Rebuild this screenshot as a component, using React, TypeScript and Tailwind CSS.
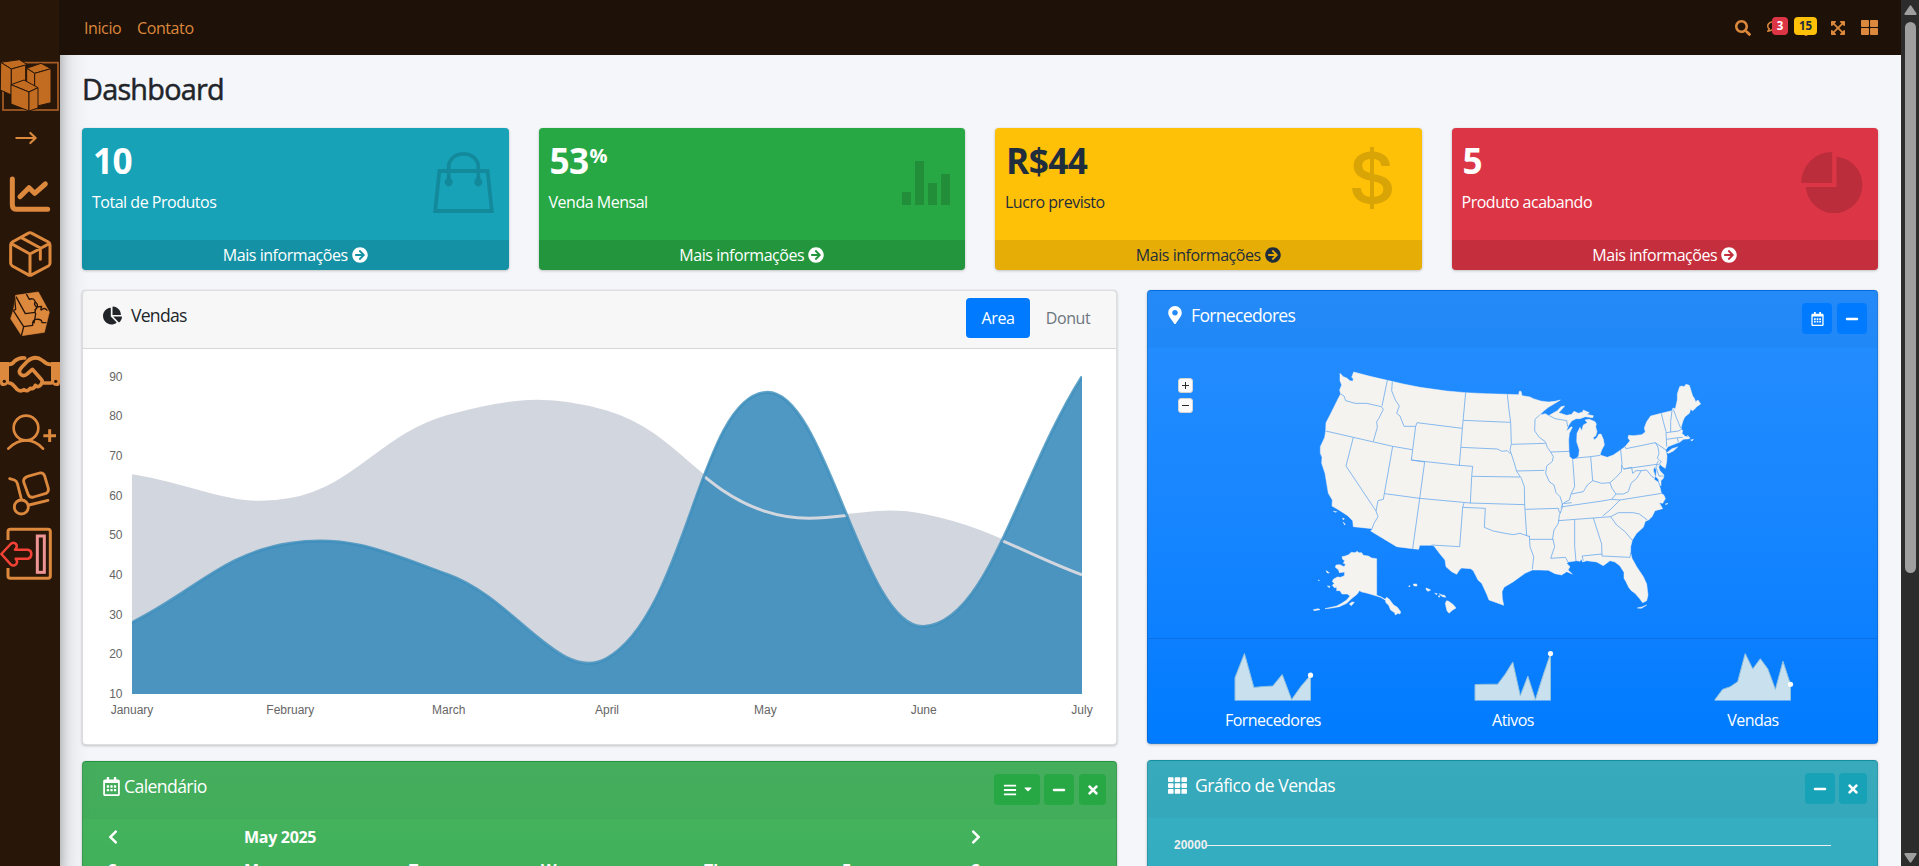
import React from "react";
import {
  FaArrowCircleRight,
  FaBars,
  FaCaretDown,
  FaChartPie,
  FaChevronLeft,
  FaChevronRight,
  FaExpandArrowsAlt,
  FaMapMarkerAlt,
  FaMinus,
  FaRegBell,
  FaRegCalendarAlt,
  FaRegComments,
  FaSearch,
  FaTh,
  FaThLarge,
  FaTimes,
} from "react-icons/fa";

/* ---------- Sidebar ---------- */

const ORANGE = "#dc883d";

function Sidebar() {
  return (
    <aside className="relative z-10 flex h-[866px] w-[60px] shrink-0 flex-col bg-[#281609] pt-[55px] shadow-[0_14px_28px_rgba(0,0,0,0.25),0_10px_10px_rgba(0,0,0,0.22)]">
      {/* boxes logo */}
      <svg className="h-[60px] w-[60px]" viewBox="0 165 180 180">
        <rect x="9" y="188" width="165" height="142" fill="none" stroke="#7d451c" strokeWidth="6" />
        <rect x="9" y="188" width="165" height="142" fill="none" stroke="#b7662a" strokeWidth="2.5" />
        <g fill="#c26c22" stroke="#281609" strokeWidth="3" strokeLinejoin="round">
          <path d="M2 187L58 179L82 194L34 207Z" />
          <path d="M2 187L34 207V285L1 270Z" />
          <path d="M34 207L77 195V246L34 255Z" />
          <path d="M80 205L123 190L153 206L104 220Z" />
          <path d="M80 205L104 220V270L80 250Z" />
          <path d="M104 220L153 206V308L104 320Z" />
          <path d="M33 254L72 240L114 263L87 276Z" />
          <path d="M33 254L87 276V333L33 312Z" />
          <path d="M87 276L114 263V324L87 333Z" />
        </g>
      </svg>
      {/* expand arrow */}
      <svg className="h-[50px] w-[60px]" viewBox="0 345 180 150" fill="none" stroke={ORANGE} strokeWidth="6.5" strokeLinecap="round" strokeLinejoin="round">
        <path d="M49 414H106M91 399L107 414L91 429" />
      </svg>
      {/* line chart */}
      <svg className="h-[57px] w-[60px]" viewBox="0 495 180 171" fill="none" stroke={ORANGE} strokeWidth="15" strokeLinecap="round" strokeLinejoin="round">
        <path d="M37 537V614Q37 628 51 628H143M60 590L87 563L104 580L136 552" />
      </svg>
      {/* package */}
      <svg className="h-[64px] w-[60px]" viewBox="0 666 180 192" fill="none" stroke={ORANGE} strokeWidth="9" strokeLinejoin="round" strokeLinecap="round">
        <path d="M84 700Q90 696 96 700L145 726Q150 729 150 735V790Q150 795 145 798L96 824Q90 828 84 824L37 798Q32 795 32 790V735Q32 729 37 726ZM34 731L90 762L148 731M90 762V824M64 713L121 744V778" />
      </svg>
      {/* puzzle cube */}
      <svg className="h-[54px] w-[60px]" viewBox="0 -12 180 162">
        <path d="M47 16L115 6L132 37L148 67L133 127L65 137L32 86L41 58Z" fill={ORANGE} stroke={ORANGE} strokeWidth="2" />
        <path d="M40 62L71 110L64 138M71 110L98 106Q96 90 108 88Q126 86 126 98L139 98M48 20L76 71L105 67L107 72L102 100M79 12L88 28Q102 22 106 36Q100 42 109 51L126 49M105 67Q104 60 112 52M126 49Q120 58 124 60Q134 50 142 62M104 60Q120 48 106 36M40 62L47 58L44 24" fill="none" stroke="#281609" strokeWidth="4" strokeLinejoin="round" />
      </svg>
      {/* handshake */}
      <svg className="h-[60px] w-[60px]" viewBox="0 150 180 180">
        <path d="M0 216H27V275Q22 288 10 288Q0 288 0 278Z" fill={ORANGE} />
        <path d="M180 216H153V275Q158 288 170 288Q180 288 180 278Z" fill={ORANGE} />
        <circle cx="13" cy="274" r="5" fill="#281609" />
        <circle cx="167" cy="274" r="5" fill="#281609" />
        <path d="M27 223Q38 223 44 213Q57 202 74 204M27 279Q36 279 43 289L51 298Q62 307 72 299Q83 307 91 295Q102 298 106 286Q116 295 124 282Q130 274 123 267L97 238L80 253Q70 261 61 252Q54 243 65 232L83 213Q105 194 128 212Q140 224 154 223M128 279H154" fill="none" stroke={ORANGE} strokeWidth="11" strokeLinejoin="round" strokeLinecap="round" />
      </svg>
      {/* add user */}
      <svg className="h-[60px] w-[60px]" viewBox="0 330 180 180" fill="none" stroke={ORANGE} strokeWidth="8" strokeLinecap="round">
        <circle cx="78" cy="414" r="37" />
        <path d="M25 476Q49 451 78 451Q107 451 129 476" />
        <path d="M149 418V456M130 437H168" strokeLinecap="butt" strokeWidth="9" />
      </svg>
      {/* hand truck */}
      <svg className="h-[62px] w-[60px]" viewBox="0 510 180 186" fill="none" stroke={ORANGE} strokeWidth="8.5" strokeLinecap="round" strokeLinejoin="round">
        <path d="M29 566L43 570Q50 573 52 580L64 627M87 645L144 631" />
        <circle cx="64" cy="651" r="21" />
        <path d="M83 559L119 549Q130 547 134 558L145 595Q147 606 138 610L101 621Q88 624 84 612L71 576Q69 564 83 559Z" />
      </svg>
      {/* exit */}
      <svg className="h-[68px] w-[60px]" viewBox="0 696 180 204" fill="none" strokeLinejoin="round">
        <path d="M24 750V725Q24 718 31 718H144Q151 718 151 725V858Q151 865 144 865H31Q24 865 24 858V834" stroke={ORANGE} strokeWidth="9" />
        <rect x="112" y="738" width="21" height="109" stroke="#ee9494" strokeWidth="9" strokeLinejoin="miter" />
        <path d="M4 792L32 762Q40 754 48 762Q54 770 45 779H84Q94 781 94 792Q94 804 84 806H47Q55 815 48 823Q40 830 32 823Z" stroke="#f44336" strokeWidth="7.5" />
      </svg>
    </aside>
  );
}

/* ---------- Top bar ---------- */

function TopBar() {
  return (
    <header className="relative z-20 -ml-px flex h-[55px] w-[1842px] shrink-0 items-center bg-[#1e1107] pl-[25px] pr-[23px] text-[16px] text-[#dc883d]">
      <a className="w-[53px] tracking-[-0.4px]">Inicio</a>
      <a className="tracking-[-0.4px]">Contato</a>
      <div className="ml-auto flex items-center">
        <FaSearch className="h-4 w-4" />
        <div className="relative ml-4 h-4 w-[18px]">
          <FaRegComments className="h-4 w-[18px]" />
          <span className="absolute -top-[3px] left-[5px] flex h-[18px] w-4 items-center justify-center rounded bg-[#dc3545] text-[11.5px] font-bold text-white">3</span>
        </div>
        <div className="relative ml-[14px] h-4 w-[14px]">
          <FaRegBell className="h-4 w-[14px]" />
          <span className="absolute -left-[5px] -top-[3px] flex h-[18px] w-[23px] items-center justify-center rounded bg-[#ffc107] text-[11.5px] font-bold text-[#1f2d3d]">15</span>
        </div>
        <FaExpandArrowsAlt className="ml-[17px] h-4 w-4" />
        <FaThLarge className="ml-[15px] h-[17px] w-[17px]" />
      </div>
    </header>
  );
}

/* ---------- Summary boxes ---------- */

function BagArt() {
  return (
    <svg className="h-[61px] w-[61px]" viewBox="433 152 61 61" fill="none" stroke="rgba(0,0,0,0.15)" strokeWidth="3.8">
      <path d="M439.4 171H487.6L491.8 211H435.2ZM448.7 169V166.5A14.8 12.6 0 0 1 478.3 166.5V169M448.7 173V178M478.3 173V178" />
      <g stroke="none" fill="rgba(0,0,0,0.15)">
        <ellipse cx="448.7" cy="182" rx="4" ry="4.4" />
        <ellipse cx="478.3" cy="182" rx="4" ry="4.4" />
      </g>
    </svg>
  );
}

function BarsArt() {
  return (
    <svg className="-mr-px mt-[9px] h-[44px] w-[49px]" viewBox="0 0 49 44" fill="rgba(0,0,0,0.15)">
      <path d="M0 31H9V44H0ZM13 0H22V44H13ZM26 22H35V44H26ZM39 13H48V44H39Z" />
    </svg>
  );
}

function DollarArt() {
  return (
    <svg className="-mt-[5px] mr-[15px] h-[62px] w-[40px]" viewBox="0 0 40 62">
      <path
        d="M18 0H22V4.6C31 5.4 37.6 10.5 38 19H29.5C28.8 14.8 26.2 12.7 22 12.1V27C34 29.5 40 33.5 40 42C40 51 32.5 56.3 22 57.2V62H18V57.2C7 56.3 .5 50 0 41H8.8C9.5 46.5 12.5 49.2 18 49.8V33.6C7.5 31.4 1.6 27 1.6 19C1.6 10.5 8.5 5.4 18 4.6ZM18 12C13 12.4 10.3 15 10.3 18.6C10.3 22.6 12.6 24.6 18 26ZM22 34.6V49.8C27.8 49.4 31.3 46.7 31.3 42.5C31.3 38 28.7 36.1 22 34.6Z"
        fill="rgba(0,0,0,0.15)"
      />
    </svg>
  );
}

function PieArt() {
  return (
    <svg className="h-[61px] w-[62px]" viewBox="365 456 185 183" fill="rgba(0,0,0,0.15)">
      <path d="M458 549H365A93 93 0 0 1 458 456ZM471 470A85 85 0 1 1 379 561H471Z" />
    </svg>
  );
}

type BoxProps = {
  color: string;
  value: React.ReactNode;
  label: string;
  art: React.ReactNode;
};

function SummaryBox({ color, value, label, art }: BoxProps) {
  return (
    <section className={`flex h-[142px] flex-col overflow-hidden rounded shadow-[0_0_1px_rgba(0,0,0,0.125),0_1px_3px_rgba(0,0,0,0.2)] ${color}`}>
      <div className="flex h-[112px] justify-between pl-[10px] pr-[15px]">
        <div>
          <div className="mt-[11px] h-[42px] pl-px text-[35.2px] font-bold leading-[42px] tracking-[-0.6px]">{value}</div>
          <p className="mt-[9px] text-[16px] leading-6 tracking-[-0.48px]">{label}</p>
        </div>
        <div className="mt-6">{art}</div>
      </div>
      <a className="flex h-[30px] items-center justify-center gap-1 bg-black/10 text-[16px] tracking-[-0.45px]">
        Mais informações <FaArrowCircleRight className="h-4 w-4" />
      </a>
    </section>
  );
}

/* ---------- Sales area chart ---------- */

const MONTHS = ["January", "February", "March", "April", "May", "June", "July"];
const GOODS = [28, 48, 40, 19, 86, 27, 90];
const ELECTRONICS = [65, 59, 80, 81, 56, 55, 40];
const PLOT = { left: 49, right: 999, top: 27.5, bottom: 345 };

type Point = { x: number; y: number };

function toPoints(values: number[]): Point[] {
  return values.map((v, i) => ({
    x: PLOT.left + ((PLOT.right - PLOT.left) * i) / (values.length - 1),
    y: PLOT.bottom - ((v - 10) / 80) * (PLOT.bottom - PLOT.top),
  }));
}

function splinePath(points: Point[]): string {
  const clamp = (y: number) => Math.max(PLOT.top, Math.min(PLOT.bottom, y));
  const dist = (a: Point, b: Point) => Math.hypot(b.x - a.x, b.y - a.y);
  const handles = points.map((p, i) => {
    const prev = points[i - 1] ?? p;
    const next = points[i + 1] ?? p;
    const total = dist(prev, p) + dist(p, next);
    const a = (0.4 * dist(prev, p)) / total;
    const b = (0.4 * dist(p, next)) / total;
    return {
      before: { x: p.x - a * (next.x - prev.x), y: clamp(p.y - a * (next.y - prev.y)) },
      after: { x: p.x + b * (next.x - prev.x), y: clamp(p.y + b * (next.y - prev.y)) },
    };
  });
  let d = `M${points[0].x} ${points[0].y}`;
  for (let i = 1; i < points.length; i++) {
    const { after } = handles[i - 1];
    const { before } = handles[i];
    d += `C${after.x} ${after.y} ${before.x} ${before.y} ${points[i].x} ${points[i].y}`;
  }
  return d;
}

function AreaChart() {
  const goods = splinePath(toPoints(GOODS));
  const electronics = splinePath(toPoints(ELECTRONICS));
  const close = `L${PLOT.right} ${PLOT.bottom}L${PLOT.left} ${PLOT.bottom}Z`;
  return (
    <svg className="h-[394px] w-[1033px]" viewBox="0 0 1033 394" fontFamily="Liberation Sans, Arial, sans-serif" fontSize="12" fill="#666">
      <defs>
        <clipPath id="plot">
          <rect x={PLOT.left} y={PLOT.top - 1.5} width={PLOT.right - PLOT.left} height={PLOT.bottom - PLOT.top + 1.5} />
        </clipPath>
      </defs>
      <g clipPath="url(#plot)" fill="none">
        <path d={electronics + close} fill="#d2d6de" />
        <path d={goods + close} fill="rgba(60,141,188,0.9)" />
        <path d={electronics} stroke="#d2d6de" strokeWidth="3" />
        <path d={goods} stroke="rgba(60,141,188,0.8)" strokeWidth="3" />
      </g>
      {[90, 80, 70, 60, 50, 40, 30, 20, 10].map((v, i) => (
        <text key={v} x="39.5" y={PLOT.top + i * 39.69 + 4} textAnchor="end">
          {v}
        </text>
      ))}
      {MONTHS.map((m, i) => (
        <text key={m} x={PLOT.left + i * 158.33} y="365" textAnchor="middle">
          {m}
        </text>
      ))}
    </svg>
  );
}

/* ---------- Map ---------- */

const MAINLAND =
  "M120 70L130 80L140 84L150 92L158 94L160 86L155 82L161 66L210 79L262 91L310 102L360 112L440 123L497 128L560 131L622 133L656 134L658 124L663 124L666 137L690 141L700 146L722 153L745 156L765 154L781 150L768 158L745 172L730 184L719 195L736 191L746 197L758 190L772 182L783 170L794 168L782 182L776 188L800 196L815 193L822 184L835 190L848 186L850 180L858 184L868 188L860 193L880 197L878 203L856 200L840 206L828 206L815 213L806 226L799 243L806 238L813 230L817 232L808 250L806 270L807 305L809 320L818 328L828 326L836 318L838 300L830 275L831 250L840 232L845 242L850 225L862 218L855 210L868 208L885 215L889 222L887 230L891 245L887 258L880 262L882 270L892 262L896 253L903 252L910 268L913 285L905 300L900 315L922 322L940 315L962 300L975 290L990 272L984 264L986 256L1000 257L1025 254L1036 246L1033 234L1040 215L1052 198L1084 190L1116 182L1119 174L1126 176L1132 150L1132 132L1139 110L1145 108L1152 110L1158 103L1168 106L1178 138L1182 143L1187 155L1194 150L1202 162L1190 170L1184 177L1178 182L1172 178L1168 190L1155 200L1150 210L1146 222L1143 235L1148 242L1146 250L1155 259L1167 262L1163 256L1165 266L1150 268L1140 276L1122 283L1104 290L1097 300L1101 318L1100 335L1096 355L1085 348L1080 342L1076 352L1080 362L1092 375L1090 385L1083 392L1083 408L1078 400L1075 388L1068 380L1069 360L1064 350L1060 360L1066 380L1062 388L1074 396L1080 412L1084 430L1092 436L1096 446L1088 460L1078 458L1088 476L1065 482L1056 500L1046 510L1036 514L1030 532L1010 550L997 570L992 590L992 608L996 625L1010 650L1018 662L1030 680L1040 702L1044 735L1040 752L1028 758L1018 745L1005 730L994 722L986 712L978 695L972 685L972 667L960 648L945 636L930 632L910 647L890 636L860 632L848 636L844 627L840 634L830 632L805 636L800 640L810 650L804 660L817 672L800 665L785 675L765 671L745 661L720 660L697 660L675 670L640 695L612 712L606 725L607 745L611 766L590 758L567 750L560 732L545 700L534 690L520 662L512 656L485 654L478 660L470 673L455 665L438 650L435 630L420 612L402 588L395 586L359 586L356 598L338 596L290 590L212 543L218 536L160 530L158 512L143 497L120 482L96 468L97 450L85 430L80 400L75 370L65 340L66 322L61 310L61 290L68 275L74 262L77 243L78 218L90 195L105 165L115 145L122 132L119 120L125 105L120 92Z";

const BORDERS =
  "M122 132L132 138L137 152L165 160L200 160L244 170L250 178L236 206L230 215L232 232L220 274M262 91L246 168M277 95L275 122L286 150L298 168L290 190L300 198L312 229L347 229M77 243L160 262L278 289L337 299M497 128L487 236L478 347M347 229L351 218L487 235M347 229L334 330L478 346L518 349L515 379L511 460M160 262L138 348L228 483L234 500L222 520L216 536M278 289L250 448L234 452L228 483M374 336L359 446L338 596M334 330L374 336M254 431L359 445L511 459L674 464M490 211L631 217M622 133L627 180L632 217L634 281L630 300L640 330L650 364L664 385L673 410L674 464M483 292L592 297L606 304L622 302L632 312M516 379L660 381M634 283L736 280M650 363L733 361M488 472L556 475L553 532L580 543L615 550L640 554L660 550L689 560M492 459L488 472L479 590L395 585M674 464L680 558M676 478L775 475L778 487L783 487M688 557L690 590L701 620L697 658M690 568L760 568M719 195L705 208L704 243L718 262L736 275L742 292L752 306L760 320L757 334L740 348L737 370L748 395L762 405L768 428L780 440L786 458L788 470L778 496L775 520L762 540L758 565L764 590L752 625L796 622L804 636M752 306L808 304M748 197L765 206L800 212L803 230M818 328L824 410L814 430L808 450L792 458M872 320L878 392L862 405L850 425L814 432M828 324L872 320L900 316M878 392L905 400L930 398L945 385L964 365L966 340L962 300M930 398L936 415L948 432L935 448L900 454L788 470M783 475L788 461L815 458M775 512L880 504L932 500L955 488L1000 488L1018 492L1042 510M880 504L905 582L906 618L990 622L992 608M906 612L846 618L850 632M824 510L824 590L828 634M932 500L950 525L975 545L997 571M908 498L930 480L960 450M935 448L960 450L1085 430M948 432L970 432L985 425L993 400L1010 385L1024 362L1040 360L1056 380L1064 384M964 345L971 357L1070 343L1075 333M971 357L995 352L998 370L1008 362L1024 362M975 290L978 296L1066 278L1074 292L1077 310L1072 325L1084 335L1075 345L1070 343M1066 278L1098 300M1084 190L1090 215L1098 245L1100 290M1116 182L1112 215L1112 246M1120 178L1130 205L1142 234M1099 248L1135 243L1146 237M1100 268L1134 263L1148 262M1132 264L1135 276M1070 343L1068 352L1077 378L1090 378";

const ALASKA =
  "M172 604L165 608L154 607L146 614L136 618L126 620L128 628L134 632L130 640L137 643L132 650L120 644L108 645L106 652L116 660L118 668L134 666L133 677L122 682L112 681L100 688L97 695L103 700L97 706L103 713L110 712L110 722L120 722L126 732L142 732L150 738L140 750L125 760L110 768L75 776L95 774L118 770L140 760L156 745L172 732L178 722L186 726L196 728L210 732L230 738L242 742L256 750L258 758L266 766L272 780L284 788L286 795L294 790L300 792L302 785L292 772L280 764L268 748L260 742L255 748L242 740L230 736V626L215 624L205 618L190 616L185 608L176 608Z";

const ISLANDS =
  "M340 702L350 702L351 708L342 708ZM378 714L384 716L392 720L384 724L379 720ZM404 730L412 731L410 734ZM418 731L426 735L434 736L437 742L428 740L422 736ZM414 738L420 737L418 742ZM440 752L446 754L460 764L468 774L458 780L447 790L441 782L438 770L436 760ZM326 708L330 707L328 711ZM148 762L156 756L163 757L154 767ZM40 779L55 776L60 779L42 782ZM78 662L84 665L88 669L82 669ZM82 708L90 709L88 713ZM55 690L58 691L56 693ZM100 484L110 485L108 487ZM128 504L133 506L130 510ZM130 516L136 524L133 524ZM1100 308L1116 296L1133 291L1120 303L1106 310ZM1012 774L1026 771L1040 765L1024 775ZM1158 266L1170 262L1168 266ZM1172 270L1180 268L1176 273ZM1096 462L1104 460L1098 464Z";

function UsMap() {
  return (
    <svg className="h-[280px] w-[420px]" viewBox="0 0 1260 840" strokeLinejoin="round">
      <g fill="#f4f3f0" stroke="#f4f3f0" strokeWidth="1.5">
        <path d={MAINLAND} />
        <path d={ALASKA} />
        <path d={ISLANDS} />
      </g>
      <path d={BORDERS} fill="none" stroke="#6ba9ec" strokeWidth="2.4" />
    </svg>
  );
}

/* ---------- Sparklines ---------- */

const SPARKS = [
  { label: "Fornecedores", data: [1000, 1200, 920, 927, 931, 1027, 819, 930, 1021] },
  { label: "Ativos", data: [515, 519, 520, 520, 652, 810, 370, 627, 319, 630, 921] },
  { label: "Vendas", data: [15, 19, 20, 22, 33, 27, 31, 27, 19, 30, 21] },
];

function Sparkline({ data }: { data: number[] }) {
  const min = Math.min(...data);
  const max = Math.max(...data);
  const pts = data.map((v, i) => [2 + (75.5 * i) / (data.length - 1), 48.6 - ((v - min) / (max - min)) * 46] as const);
  const line = pts.map(([x, y]) => `${x},${y}`).join(" ");
  const [ex, ey] = pts[pts.length - 1];
  return (
    <svg className="h-[50px] w-[80px] overflow-visible" viewBox="0 0 80 50">
      <polygon points={`2,49.5 ${line} 77.5,49.5`} fill="#c9e1ee" />
      <polyline points={`2,49.5 ${line} 77.5,49.5`} fill="none" stroke="#92c1dc" strokeWidth="1" />
      <circle cx={ex} cy={ey} r="2.6" fill="#fff" />
    </svg>
  );
}

/* ---------- Shared pieces ---------- */

const CARD_SHADOW = "shadow-[0_0_1px_rgba(0,0,0,0.125),0_1px_3px_rgba(0,0,0,0.2)]";

function ToolButton({ className, children }: { className: string; children: React.ReactNode }) {
  return <button className={`flex h-[31px] items-center justify-center rounded text-white ${className}`}>{children}</button>;
}

function SalesCard() {
  return (
    <section className={`h-[455px] rounded border border-black/[0.125] bg-white ${CARD_SHADOW}`}>
      <div className="flex h-[58px] justify-between border-b border-black/[0.125] bg-black/[0.03] pl-5 pr-[10px]">
        <h3 className="mt-[11px] flex h-[26px] items-center text-[17.6px] tracking-[-0.75px]">
          <FaChartPie className="mr-[9px] h-[19px] w-[19px]" />
          Vendas
        </h3>
        <div className="mt-[7px] flex h-10 text-[16px] tracking-[-0.4px]">
          <a className="flex w-16 items-center justify-center rounded bg-[#007bff] text-white">Area</a>
          <a className="flex w-[76px] items-center justify-center text-[#6c757d]">Donut</a>
        </div>
      </div>
      <AreaChart />
    </section>
  );
}

function MapCard() {
  return (
    <section className={`flex h-[454px] flex-col rounded border border-black/[0.125] bg-linear-to-b from-[#268fff] to-[#007bff] text-white ${CARD_SHADOW}`}>
      <div className="flex h-[57px] shrink-0 justify-between bg-black/[0.03] pl-5 pr-[10px]">
        <h3 className="mt-[11px] flex h-[26px] items-center text-[17.6px] tracking-[-0.7px]">
          <FaMapMarkerAlt className="mr-[9px] h-[18px] w-[14px]" />
          Fornecedores
        </h3>
        <div className="mt-3 flex gap-[5px]">
          <ToolButton className="w-[30px] bg-[#007bff]">
            <FaRegCalendarAlt className="h-[14px] w-[13px]" />
          </ToolButton>
          <ToolButton className="w-[30px] bg-[#007bff]">
            <FaMinus className="h-[14px] w-[14px]" />
          </ToolButton>
        </div>
      </div>
      <div className="flex h-[290px] shrink-0 pl-[30px]">
        <div className="mt-[30px] flex w-[15px] flex-col gap-[5px] text-[#292929]">
          <span className="flex h-[15px] items-center justify-center rounded-[3px] border border-[#d5d5d5] bg-[#fafafa]">
            <svg className="h-[9px] w-[9px]" viewBox="0 0 9 9" stroke="currentColor">
              <path d="M1 4.5H8M4.5 1V8" />
            </svg>
          </span>
          <span className="flex h-[15px] items-center justify-center rounded-[3px] border border-[#d5d5d5] bg-[#fafafa]">
            <svg className="h-[9px] w-[9px]" viewBox="0 0 9 9" stroke="currentColor">
              <path d="M1 4.5H8" />
            </svg>
          </span>
        </div>
        <div className="ml-[107px] mt-[2px]">
          <UsMap />
        </div>
      </div>
      <div className="grid grow grid-cols-3 border-t border-black/[0.125] pl-[5px] pr-[4px] pt-3">
        {SPARKS.map((s) => (
          <div key={s.label} className="flex flex-col items-center">
            <Sparkline data={s.data} />
            <span className="mt-[7px] text-[16px] leading-6 tracking-[-0.55px]">{s.label}</span>
          </div>
        ))}
      </div>
    </section>
  );
}

function CalendarCard() {
  return (
    <section className={`h-[430px] rounded border border-black/[0.125] bg-linear-to-b from-[#48b461] to-[#28a745] text-white ${CARD_SHADOW}`}>
      <div className="flex h-[57px] justify-between bg-black/[0.03] pl-5 pr-[10px]">
        <h3 className="mt-[11px] flex h-[26px] items-center text-[17.6px] tracking-[-0.6px]">
          <FaRegCalendarAlt className="mr-[4px] h-[19px] w-[17px]" />
          Calendário
        </h3>
        <div className="mt-3 flex">
          <ToolButton className="w-[46px] gap-[7px] bg-[#28a745]">
            <FaBars className="h-[14px] w-[14px]" />
            <FaCaretDown className="-mt-[2px] h-3 w-2" />
          </ToolButton>
          <ToolButton className="ml-1 w-[30px] bg-[#28a745]">
            <FaMinus className="h-[14px] w-[14px]" />
          </ToolButton>
          <ToolButton className="ml-[5px] w-[27px] bg-[#28a745]">
            <FaTimes className="h-[14px] w-[14px]" />
          </ToolButton>
        </div>
      </div>
      <div className="flex h-[36px] items-center pl-[23px] text-[16px] font-bold">
        <FaChevronLeft className="mr-[124px] h-4 w-[14px]" />
        <span className="w-[725px] tracking-[-0.3px]">May 2025</span>
        <FaChevronRight className="h-4 w-[14px]" />
      </div>
      <div className="mt-[3px] flex pl-[25px] text-[16px] font-bold leading-6">
        <span className="w-[136px]">Su</span>
        <span className="w-[165px]">Mo</span>
        <span className="w-[132px]">Tu</span>
        <span className="w-[163px]">We</span>
        <span className="w-[138px]">Th</span>
        <span className="w-[129px]">Fr</span>
        <span>Sa</span>
      </div>
    </section>
  );
}

function GraphCard() {
  return (
    <section className={`h-[430px] rounded border border-black/[0.125] bg-linear-to-b from-[#3ab0c3] to-[#17a2b8] text-white ${CARD_SHADOW}`}>
      <div className="flex h-[57px] justify-between bg-black/[0.03] pl-5 pr-[10px]">
        <h3 className="mt-[11px] flex h-[26px] items-center text-[17.6px] tracking-[-0.52px]">
          <FaTh className="mr-[8px] h-[19px] w-[19px]" />
          Gráfico de Vendas
        </h3>
        <div className="mt-3 flex">
          <ToolButton className="w-[30px] bg-[#17a2b8]">
            <FaMinus className="h-[14px] w-[14px]" />
          </ToolButton>
          <ToolButton className="ml-1 w-[28px] bg-[#17a2b8]">
            <FaTimes className="h-[14px] w-[14px]" />
          </ToolButton>
        </div>
      </div>
      <div className="flex items-center pl-[26px] pt-[18px] font-['Liberation_Sans',Arial,sans-serif] text-[12px] font-bold leading-[18px] text-[#efefef]">
        20000
        <div className="h-px w-[624px] bg-[#efefef]" />
      </div>
    </section>
  );
}

function ScrollBar() {
  return (
    <div className="flex h-[866px] w-[18px] shrink-0 flex-col items-center bg-[#2c2c2c]">
      <svg className="mt-[5px] h-[10px] w-[13px]" viewBox="0 0 13 10" fill="#9f9f9f">
        <path d="M5.7 .7Q6.5 -.2 7.3 .7L12.5 8.4Q13 10 11.5 10H1.5Q0 10 .5 8.4Z" />
      </svg>
      <div className="ml-px mt-[7px] h-[551px] w-[11px] rounded-full bg-[#9f9f9f]" />
      <svg className="mb-[3px] mt-auto h-[10px] w-[13px]" viewBox="0 0 13 10" fill="#9f9f9f">
        <path d="M5.7 9.3Q6.5 10.2 7.3 9.3L12.5 1.6Q13 0 11.5 0H1.5Q0 0 .5 1.6Z" />
      </svg>
    </div>
  );
}

export default function App() {
  return (
    <div className="flex h-[866px] w-[1919px] overflow-hidden bg-[#f4f6f9] font-['Open_Sans','Noto_Sans',sans-serif] text-[#212529]">
      <Sidebar />
      <div className="flex w-[1841px] shrink-0 flex-col">
        <TopBar />
        <main className="pl-[22px] pr-[23px]">
          <h1 className="mt-4 h-[35px] text-[28.8px] font-medium leading-[35px] tracking-[-0.75px] [-webkit-text-stroke:0.5px_#212529]">Dashboard</h1>
          <div className="mt-[22px] grid grid-cols-4 gap-[30px]">
            <SummaryBox color="bg-[#17a2b8] text-white" value="10" label="Total de Produtos" art={<BagArt />} />
            <SummaryBox
              color="bg-[#28a745] text-white"
              value={
                <span className="flex">
                  53<span className="-mt-[4px] ml-px text-[20px]">%</span>
                </span>
              }
              label="Venda Mensal"
              art={<BarsArt />}
            />
            <SummaryBox color="bg-[#ffc107] text-[#1f2d3d]" value="R$44" label="Lucro previsto" art={<DollarArt />} />
            <SummaryBox color="bg-[#dc3545] text-white" value="5" label="Produto acabando" art={<PieArt />} />
          </div>
          <div className="mt-5 flex gap-[30px]">
            <div className="flex w-[1035px] flex-col gap-4">
              <SalesCard />
              <CalendarCard />
            </div>
            <div className="flex w-[731px] flex-col gap-4">
              <MapCard />
              <GraphCard />
            </div>
          </div>
        </main>
      </div>
      <ScrollBar />
    </div>
  );
}
